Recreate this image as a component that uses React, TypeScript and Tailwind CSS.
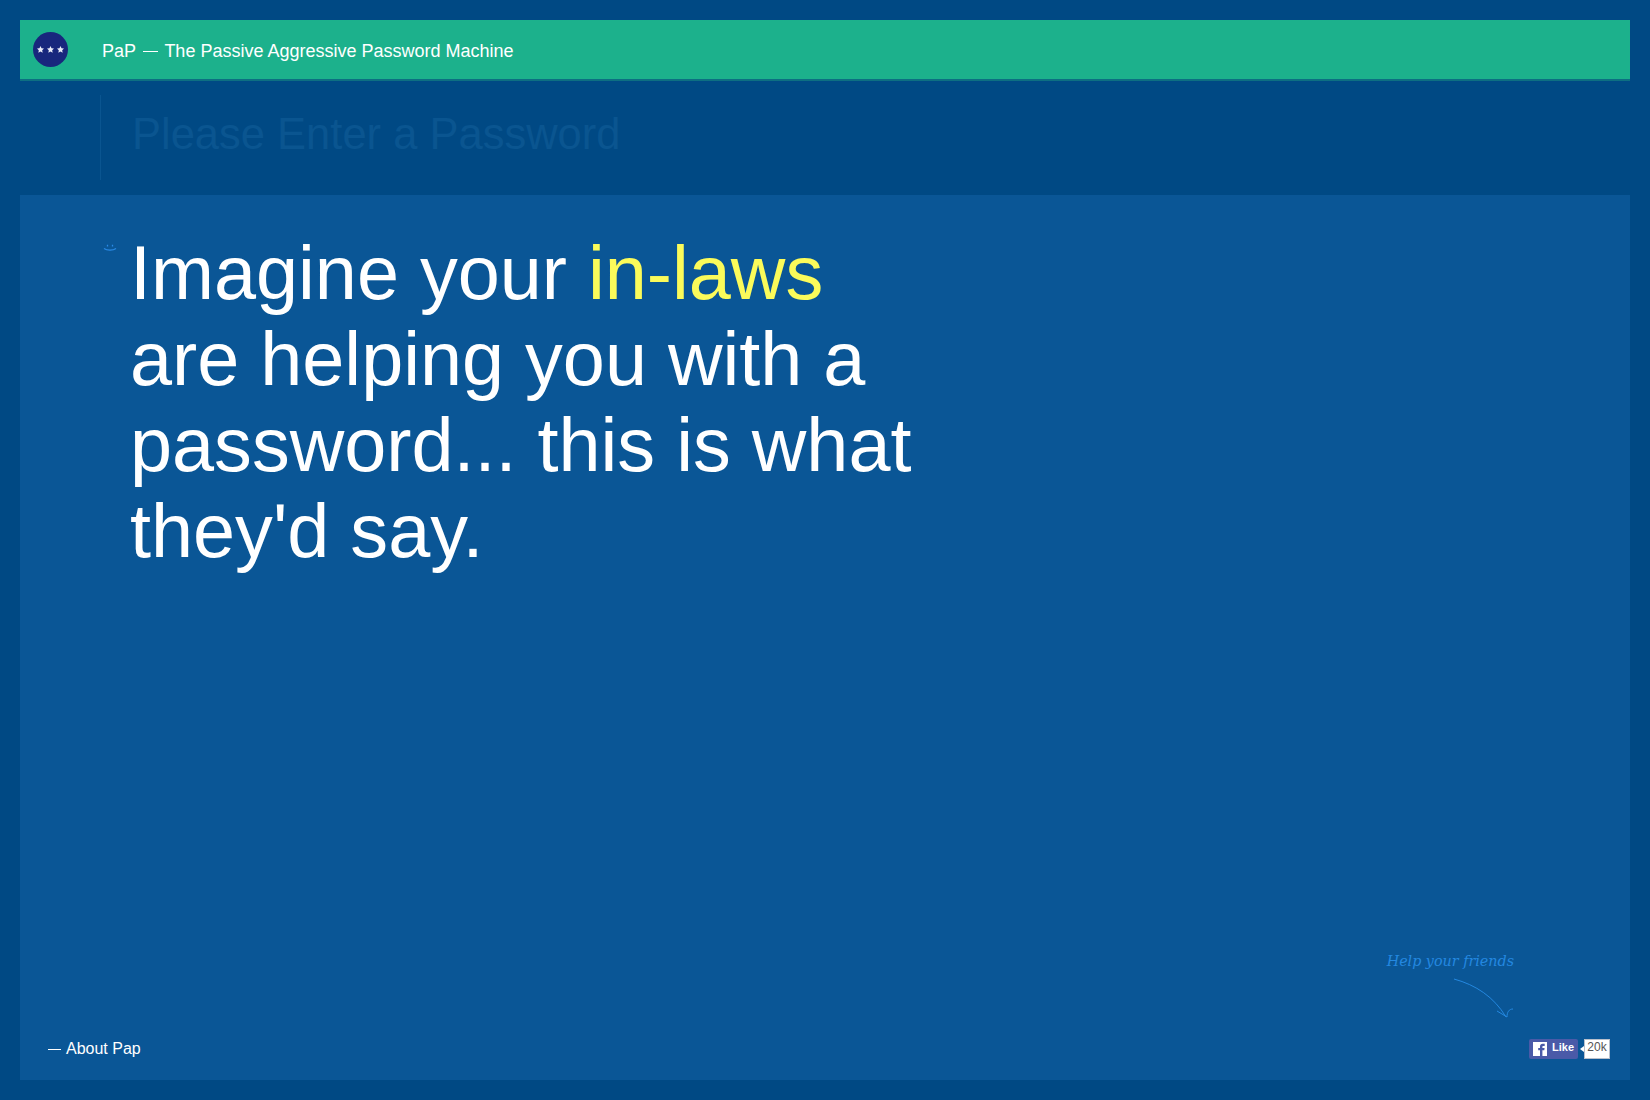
export default function App() {
  return (
    <div className="h-[1100px] overflow-hidden bg-[#004984] p-5 flex flex-col font-['Liberation_Sans',sans-serif]">
      {/* top bar */}
      <header className="h-[61px] shrink-0 bg-[#1cb18c] border-b-2 border-[#0d6f82] flex items-center pl-[13px]">
        <div className="w-[35px] h-[35px] rounded-full bg-[#18277d] flex items-center justify-center gap-[3px]">
          <Star />
          <Star />
          <Star />
        </div>
        <div className="ml-[34px] pt-[3px] text-[18px] text-white">
          PaP <span className="inline-block w-[15px] h-px bg-white align-middle mx-[2px]" /> The Passive Aggressive Password Machine
        </div>
      </header>

      {/* password input */}
      <div className="h-[114px] shrink-0 pt-[14px] pl-[80px]">
        <div className="h-[85px] border-l border-[#0a5590] pl-[31px] pb-[6px] flex items-center">
          <input
            readOnly
            placeholder="Please Enter a Password"
            className="w-[900px] bg-transparent outline-none text-[43.5px] placeholder:text-[#0a5590]"
          />
        </div>
      </div>

      {/* result panel */}
      <main className="flex-1 bg-[#0a5696] flex flex-col justify-between pt-[35px] pb-[21px] pl-[28px] pr-[20px]">
        <div className="flex items-start pl-[55px]">
          <svg width="14" height="7" viewBox="0 0 14 7" className="mt-[14px]" fill="none" stroke="#2a8ae6">
            <path d="M1 4.500c3 2.200 9 2.200 12 0" strokeWidth="1.300" />
            <path d="M4.500 .8v1.600M9.500 .8v1.600" strokeWidth="1.300" />
          </svg>
          <h1 className="ml-[13px] w-[800px] text-[75.6px] leading-[86px] text-white">
            Imagine your <span className="text-[#fbfb5a]">in-laws</span> are helping you with a password... this is what they'd say.
          </h1>
        </div>

        <div className="flex items-end justify-between">
          <a className="flex items-center gap-[5px] text-[16px] text-white leading-[20px]">
            <span className="w-[13px] h-px bg-white" />
            About Pap
          </a>
          <div className="flex flex-col items-end">
            <div className="mr-[96px] text-[14.3px] leading-[20px] italic text-[#2488e0] font-['DejaVu_Serif',serif]">Help your friends</div>
            <svg width="62" height="42" viewBox="0 0 62 42" className="mr-[95px] mt-[7px] mb-[19px]" fill="none" stroke="#2488e0" strokeWidth="1">
              <path d="M1 1c22 6 40 18 52 38" />
              <path d="M44 33l10 6c0-5 2-8 6-8" />
            </svg>
            <div className="flex items-start">
              <div className="w-[49px] h-5 rounded-[2px] bg-[#4a5aa8] flex items-start pl-1 pt-[3px]">
                <svg width="14" height="14" viewBox="0 0 14 14">
                  <path fill="#fff" d="M0 0h14v14H0z" />
                  <path fill="#4a5aa8" d="M7 14V8.200H5.200V6H7V4.400C7 2.700 8.100 1.800 9.600 1.800h2.100v2.100h-1.300c-.8 0-1 .4-1 1V6h2.200l-.3 2.200H9.400V14z" />
                </svg>
                <span className="ml-[5px] mt-[-1px] text-[11px] leading-[13px] font-bold text-white">Like</span>
              </div>
              <div className="mt-[7px] ml-[2px] w-0 h-0 border-y-[3px] border-y-transparent border-r-[4px] border-r-white" />
              <div className="w-[26px] h-[20px] bg-white border border-[#b9c0cc] text-[12px] leading-[14px] text-[#555] text-center">20k</div>
            </div>
          </div>
        </div>
      </main>
    </div>
  );
}

function Star() {
  return (
    <svg width="7" height="7" viewBox="0 0 10 10" fill="#e8ebf8">
      <path d="M5 0l1.500 3.300 3.500.4-2.600 2.400.7 3.600L5 7.900 1.900 9.700l.7-3.600L0 3.700l3.500-.4z" />
    </svg>
  );
}
